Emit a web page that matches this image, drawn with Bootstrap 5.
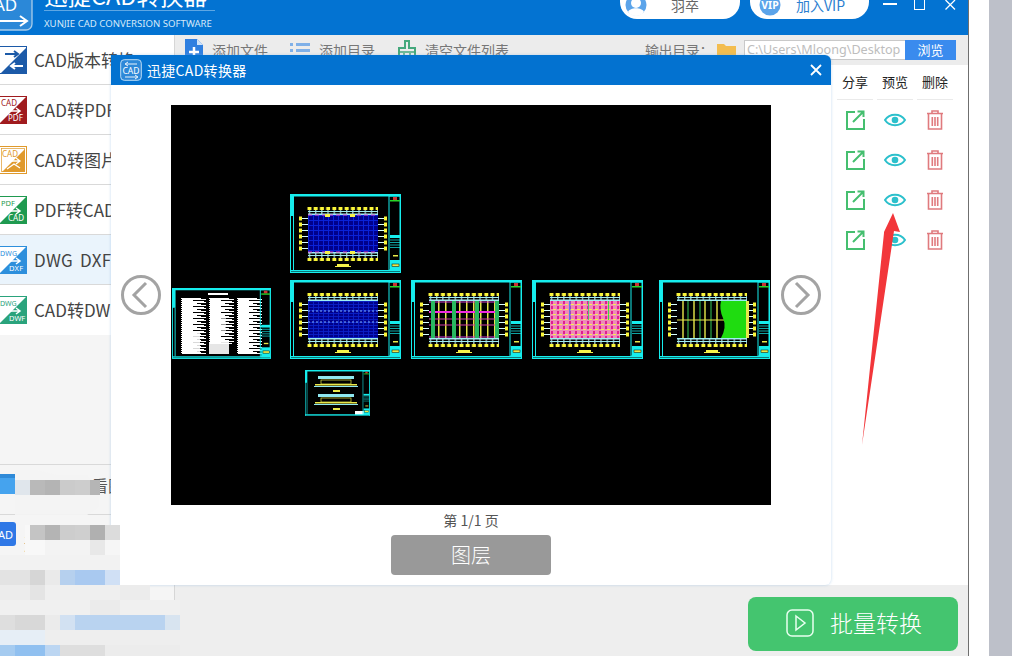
<!DOCTYPE html>
<html lang="zh-CN">
<head>
<meta charset="utf-8">
<title>迅捷CAD转换器</title>
<link href="https://cdn.jsdelivr.net/npm/bootstrap@5.3.0/dist/css/bootstrap.min.css" rel="stylesheet">
<style>
html,body{margin:0;padding:0;background:#fff;overflow:hidden}
body{font-family:"Noto Sans CJK SC","Noto Sans",sans-serif;width:1012px;height:656px}
.screen{width:1012px;height:656px;overflow:hidden;background:#fff}
.appwin{width:969px;height:656px;border-right:1px solid #6f6f6f;flex:none}
.gutter-g{width:23px;background:#bdc0c9;margin-left:20px;flex:none}
.apphead{height:35px;background:#0373d2;overflow:hidden;flex:none}
.logo-box{width:33px;height:46px;flex:none;margin-right:11px;margin-bottom:4px}
.brand-title{font-size:23.5px;line-height:30px;color:#fff;font-weight:400;height:30px;border-bottom:1px solid #5ea7e4;width:171px;white-space:nowrap;overflow:hidden;margin-bottom:0}
.brand-title span{position:relative;top:-1px}
.brand-sub{font-family:"Noto Sans",sans-serif;font-size:9.6px;line-height:13px;color:#d5e9f9;white-space:nowrap;height:24px;padding-top:6px}
.pill-btn{height:40px;background:#fff;color:#666;font-size:14px;width:120px;flex:none;margin-bottom:16px;padding-top:16px;padding-left:10px;text-align:center;line-height:20px;position:relative;border-radius:17px}
.pill-vip{color:#2d7fd0;width:119px;margin-left:10px;padding-left:22px}
.pill-ava{position:absolute;left:1px;top:0;width:30px;height:38px}
.pill-ava-vip{left:5px}
.winctl{margin-bottom:21px;height:14px;flex:none}
.wc-min{width:14px;margin-left:14px}
.wc-max{width:12px;margin-left:17px}
.wc-close{width:11px;margin-left:19px;margin-right:12px}
.appbody{min-height:0}
.sidebar{width:175px;background:#f5f5f5;border-right:1px solid #d6d6d6;flex:none;position:relative}
.side-item{height:50px;background:#fff;border-bottom:1px solid #d9d9d9;color:#444;font-size:17px;line-height:50px;white-space:nowrap;overflow:hidden;padding:0;border-radius:0}
.side-item.is-on{background:#eaf4fc;word-spacing:3px;letter-spacing:.3px}
.side-icn{width:28px;height:28px;margin-left:-1px;margin-right:7px;flex:none}
.side-spacer{height:130px;border-bottom:1px solid #d9d9d9}
.side-mini{height:50px;border-bottom:1px solid #d9d9d9;font-size:16px;color:#555;white-space:nowrap;overflow:hidden}
.mini-ic{flex:none;margin-bottom:11px}
.mini-label{margin-left:76px;margin-bottom:10px}
.mini-label2{margin-left:8px;margin-top:6px}
.toolbar{height:30px;background:#ececec;flex:none;padding:0 12px 0 10px;font-size:14px;color:#777;white-space:nowrap}
.tool-ic{flex:none;margin-right:9px}
.ti-list{margin-left:22px}
.ti-brush{margin-left:23px}
.out-label{margin-left:auto;letter-spacing:-.4px}
.path-box{width:161px;height:20px;border:1px solid #c9c9c9;border-right:0;background:#fff;color:#bdbdbd;font-family:"Noto Sans",sans-serif;font-size:12.6px;line-height:18px;padding-left:2px;overflow:hidden;white-space:nowrap;flex:none}
.browse-btn{width:51px;height:20px;background:#3a8bee;color:#fff;font-size:13px;line-height:20px;text-align:center;border-radius:0;border:0;padding:0}
.work{min-height:0;background:#fff}
.opcol{width:137px;padding-left:6px;flex:none;margin-left:auto}
.ophead{height:35px;font-size:13px;color:#222;line-height:33px;text-align:center;width:36px;border-bottom:1px solid #eaeaea}
.oprow{height:40px}
.opcell{width:36px}
.appfoot{height:71px;background:#eee;flex:none;padding:12px 10px 5px 0}
.go-btn{width:210px;height:54px;background:#44c56f;color:#fff;font-size:23px;line-height:54px;border:0;border-radius:8px;padding:0 0 0 2px;font-weight:300}
.go-label{line-height:30px;margin-bottom:5px}
.go-ic{margin-bottom:2px}
.modalwin{position:absolute;left:111px;top:55px;width:720px;height:530px;background:#fff;border-radius:0 6px 6px 0;box-shadow:0 0 3px rgba(120,170,220,.45)}
.modalbar{height:30px;background:#0372d0;color:#fff;font-size:14px;line-height:30px;border-radius:0 6px 0 0;padding-left:9px}
.modal-close{margin-right:9px}
.modal-name{margin-left:1px;margin-right:auto;letter-spacing:.3px}
.stage-row{padding-top:20px}
.stage{width:600px;height:400px;background:#000;display:block;flex:none}
.navwrap{width:60px;flex:none;margin-bottom:20px}
.page-tip{font-size:14px;color:#555;line-height:20px;margin-top:5px}
.layer-btn{width:160px;height:40px;background:#999;border:0;color:#fff;font-size:20px;line-height:40px;padding:0;border-radius:4px;margin-top:5px;font-weight:300}
.arrowmark{position:absolute;left:855px;top:205px}
.mosaic{position:absolute;left:0;top:465px}
</style>
</head>
<body>
<div class="screen d-flex position-relative">
  <div class="appwin d-flex flex-column">
    <header class="apphead d-flex align-items-end">
      <svg class="logo-box" viewBox="0 0 33 46" aria-hidden="true">
        <rect x="-8" y="-1" width="40" height="46" rx="6" fill="#2b88d8" stroke="#a9cdea" stroke-width="1.300"/>
        <text x="-6" y="26" font-family="Noto Sans,sans-serif" font-size="17" fill="#fff">AD</text>
        <path d="M-3 36H26M20 31l7 5-7 5" fill="none" stroke="#fff" stroke-width="2"/>
      </svg>
      <div class="me-auto">
        <div class="brand-title"><span>迅捷CAD转换器</span></div>
        <div class="brand-sub">XUNJIE CAD CONVERSION SOFTWARE</div>
      </div>
      <div class="pill-btn">
        <svg class="pill-ava" viewBox="0 0 30 38" aria-hidden="true"><circle cx="15" cy="26" r="10.500" fill="#5ba4ea"/><circle cx="15" cy="24" r="5" fill="#fff"/><path d="M7 33c2-5 14-5 16 0a10 10 0 0 1-16 0z" fill="#fff"/></svg>羽卒
      </div>
      <div class="pill-btn pill-vip">
        <svg class="pill-ava pill-ava-vip" viewBox="0 0 30 38" aria-hidden="true"><circle cx="15" cy="26" r="10.500" fill="#5ba4ea"/><text x="15" y="30" text-anchor="middle" font-family="Noto Sans,sans-serif" font-size="10.500" font-weight="700" fill="#fff">VIP</text></svg>加入VIP
      </div>
      <svg class="winctl wc-min" height="14" aria-hidden="true"><path d="M0 4H14" stroke="#fff" stroke-width="2"/></svg>
      <svg class="winctl wc-max" height="14" aria-hidden="true"><rect x=".5" y="-1" width="10" height="10.500" fill="none" stroke="#fff"/></svg>
      <svg class="winctl wc-close" height="14" aria-hidden="true"><path d="M.5 0 10 9.500M10 0 .5 9.500" stroke="#fff" stroke-width="1.300"/></svg>
    </header>

    <div class="appbody d-flex flex-grow-1">
      <aside class="sidebar d-flex flex-column">
        <div class="list-group list-group-flush">
          <div class="list-group-item side-item d-flex align-items-center">
            <svg class="side-icn" viewBox="0 0 28 28" aria-hidden="true"><rect x=".5" y=".5" width="27" height="27" fill="#fff" stroke="#1c5aa8"/><path d="M27 2 2 27h25z" fill="#1c5aa8"/><path d="M6 8h13M15 5l4 3-4 3" fill="none" stroke="#1c5aa8" stroke-width="2"/><path d="M24 20H12M16 17l-4 3 4 3" fill="none" stroke="#fff" stroke-width="2"/></svg>CAD版本转换</div>
          <div class="list-group-item side-item d-flex align-items-center">
            <svg class="side-icn" viewBox="0 0 28 28" aria-hidden="true"><rect x=".5" y=".5" width="27" height="27" fill="#fff" stroke="#a01b1e"/><path d="M27 1 1 27h26z" fill="#a01b1e"/><text x="2" y="10" font-family="Noto Sans,sans-serif" font-size="8" fill="#a01b1e">CAD</text><text x="9" y="25" font-family="Noto Sans,sans-serif" font-size="8" fill="#fff">PDF</text><path d="M5 15H21M17 12l4 3-4 3" fill="none" stroke="#fff" stroke-width="1.500"/></svg>CAD转PDF</div>
          <div class="list-group-item side-item d-flex align-items-center">
            <svg class="side-icn" viewBox="0 0 28 28" aria-hidden="true"><rect x=".5" y=".5" width="27" height="27" fill="#fff" stroke="#e09a2c"/><rect x="2.500" y="2.500" width="23" height="23" fill="none" stroke="#e09a2c" stroke-width=".7"/><path d="M26 3 3 26h23z" fill="#e09a2c"/><text x="3" y="11" font-family="Noto Sans,sans-serif" font-size="8" fill="#e09a2c">CAD</text><path d="M6 15H21M17 12l4 3-4 3M8 23l7-5 6 4" fill="none" stroke="#fff" stroke-width="1.300"/></svg>CAD转图片</div>
          <div class="list-group-item side-item d-flex align-items-center">
            <svg class="side-icn" viewBox="0 0 28 28" aria-hidden="true"><rect x=".5" y=".5" width="27" height="27" fill="#fff" stroke="#1f9a50"/><path d="M27 1 1 27h26z" fill="#1f9a50"/><text x="2" y="10" font-family="Noto Sans,sans-serif" font-size="7.500" fill="#1f9a50">PDF</text><text x="9" y="25" font-family="Noto Sans,sans-serif" font-size="8" fill="#fff">CAD</text><path d="M5 15H21M17 12l4 3-4 3" fill="none" stroke="#fff" stroke-width="1.500"/></svg>PDF转CAD</div>
          <div class="list-group-item side-item is-on d-flex align-items-center">
            <svg class="side-icn" viewBox="0 0 28 28" aria-hidden="true"><rect x=".5" y=".5" width="27" height="27" fill="#fff" stroke="#2d8fdc"/><path d="M27 1 1 27h26z" fill="#2d8fdc"/><text x="1" y="10" font-family="Noto Sans,sans-serif" font-size="7" fill="#2d8fdc">DWG</text><text x="10" y="25" font-family="Noto Sans,sans-serif" font-size="7.500" fill="#fff">DXF</text><path d="M5 15H21M17 12l4 3-4 3" fill="none" stroke="#fff" stroke-width="1.500"/></svg>DWG DXF转换</div>
          <div class="list-group-item side-item d-flex align-items-center">
            <svg class="side-icn" viewBox="0 0 28 28" aria-hidden="true"><rect x=".5" y=".5" width="27" height="27" fill="#fff" stroke="#2aa37c"/><path d="M27 1 1 27h26z" fill="#2aa37c"/><text x="1" y="10" font-family="Noto Sans,sans-serif" font-size="7" fill="#2aa37c">DWG</text><text x="10" y="25" font-family="Noto Sans,sans-serif" font-size="7.500" fill="#fff">DWF</text><path d="M5 15H21M17 12l4 3-4 3" fill="none" stroke="#fff" stroke-width="1.500"/></svg>CAD转DWF</div>
        </div>
        <div class="side-spacer"></div>
        <div class="side-mini d-flex align-items-center">
          <svg width="16" height="24" class="mini-ic" aria-hidden="true"><path d="M-5 2H15V22H-5z" fill="#45a3ee"/><path d="M-5 2H15V6H-5z" fill="#2f8ad8"/></svg><span class="mini-label">看图</span>
        </div>
        <div class="side-mini d-flex align-items-center">
          <svg width="16" height="24" class="mini-ic" aria-hidden="true"><rect x="-6" y="0" width="22" height="24" rx="3" fill="#2f78e6"/><text x="-2" y="17" font-family="Noto Sans,sans-serif" font-size="11" fill="#fff">AD</text></svg><span class="mini-label2">迅</span>
        </div>
      </aside>

      <main class="d-flex flex-column flex-grow-1">
        <div class="toolbar d-flex align-items-center">
          <svg class="tool-ic" width="18" height="22" aria-hidden="true"><path d="M0 0H12L18 6V22H0z" fill="#2f7fe0"/><path d="M9 8v10M4 13h10" stroke="#fff" stroke-width="2.500"/><path d="M12 0l6 6h-6z" fill="#cfe2f8"/></svg>
          <span>添加文件</span>
          <svg class="tool-ic ti-list" width="20" height="16" aria-hidden="true"><g fill="#7fb0e8"><rect y="1" width="3" height="3"/><rect y="7" width="3" height="3"/><rect y="13" width="3" height="3"/><rect x="6" y="1" width="14" height="3"/><rect x="6" y="7" width="14" height="3"/><rect x="6" y="13" width="14" height="3"/></g></svg>
          <span>添加目录</span>
          <svg class="tool-ic ti-brush" width="18" height="20" aria-hidden="true"><path d="M7 1h4v7h6v11H1V8h6z" fill="none" stroke="#45a87c" stroke-width="2"/><path d="M1 12H17M6 13V19M12 13V19" stroke="#45a87c" stroke-width="1.500"/></svg>
          <span>清空文件列表</span>
          <span class="out-label">输出目录：</span>
          <svg width="19" height="14" class="ms-1 me-2" aria-hidden="true"><path d="M0 1H7L9 3H19V14H0z" fill="#f3bd4f"/></svg>
          <div class="path-box">C:\Users\Mloong\Desktop</div>
          <button type="button" class="btn browse-btn">浏览</button>
        </div>
        <div class="work flex-grow-1 d-flex">
          <div class="opcol">
            <div class="d-flex gap-1">
              <div class="ophead">分享</div><div class="ophead">预览</div><div class="ophead">删除</div>
            </div>
            <div class="oprow d-flex gap-1 align-items-center">
              <div class="opcell d-flex justify-content-center"><svg width="20" height="20" viewBox="0 0 20 20" aria-hidden="true"><use href="#ic-share"/></svg></div>
              <div class="opcell d-flex justify-content-center"><svg width="22" height="16" viewBox="0 0 22 16" aria-hidden="true"><use href="#ic-eye"/></svg></div>
              <div class="opcell d-flex justify-content-center"><svg width="16" height="20" viewBox="0 0 16 20" aria-hidden="true"><use href="#ic-trash"/></svg></div>
            </div>
            <div class="oprow d-flex gap-1 align-items-center">
              <div class="opcell d-flex justify-content-center"><svg width="20" height="20" viewBox="0 0 20 20" aria-hidden="true"><use href="#ic-share"/></svg></div>
              <div class="opcell d-flex justify-content-center"><svg width="22" height="16" viewBox="0 0 22 16" aria-hidden="true"><use href="#ic-eye"/></svg></div>
              <div class="opcell d-flex justify-content-center"><svg width="16" height="20" viewBox="0 0 16 20" aria-hidden="true"><use href="#ic-trash"/></svg></div>
            </div>
            <div class="oprow d-flex gap-1 align-items-center">
              <div class="opcell d-flex justify-content-center"><svg width="20" height="20" viewBox="0 0 20 20" aria-hidden="true"><use href="#ic-share"/></svg></div>
              <div class="opcell d-flex justify-content-center"><svg width="22" height="16" viewBox="0 0 22 16" aria-hidden="true"><use href="#ic-eye"/></svg></div>
              <div class="opcell d-flex justify-content-center"><svg width="16" height="20" viewBox="0 0 16 20" aria-hidden="true"><use href="#ic-trash"/></svg></div>
            </div>
            <div class="oprow d-flex gap-1 align-items-center">
              <div class="opcell d-flex justify-content-center"><svg width="20" height="20" viewBox="0 0 20 20" aria-hidden="true"><use href="#ic-share"/></svg></div>
              <div class="opcell d-flex justify-content-center"><svg width="22" height="16" viewBox="0 0 22 16" aria-hidden="true"><use href="#ic-eye"/></svg></div>
              <div class="opcell d-flex justify-content-center"><svg width="16" height="20" viewBox="0 0 16 20" aria-hidden="true"><use href="#ic-trash"/></svg></div>
            </div>
          </div>
        </div>
        <div class="appfoot d-flex justify-content-end">
          <button type="button" class="btn go-btn d-flex align-items-center justify-content-center gap-3">
            <svg class="go-ic" width="28" height="28" viewBox="0 0 28 28" aria-hidden="true"><rect x="1" y="1" width="26" height="26" rx="5" fill="none" stroke="#e8fff0" stroke-width="1.500"/><path d="M10 7l9 7-9 7z" fill="none" stroke="#e8fff0" stroke-width="1.500"/></svg>
            <span class="go-label">批量转换</span>
          </button>
        </div>
      </main>
    </div>
  </div>
  <div class="gutter-g"></div>

  <section class="modalwin d-flex flex-column">
    <div class="modalbar d-flex align-items-center">
      <svg width="22" height="22" viewBox="0 0 22 22" class="me-1" aria-hidden="true"><rect x=".7" y=".7" width="20.600" height="20.600" rx="3.500" fill="#2d88d8" stroke="#bcdcf5"/><text x="11" y="14.500" text-anchor="middle" font-family="Noto Sans,sans-serif" font-size="8.500" fill="#fff">CAD</text><path d="M17 5H6M8 3 5 5l3 2M5 18h12M15 16l3 2-3 2" fill="none" stroke="#fff" stroke-width=".9"/></svg>
      <span class="modal-name">迅捷CAD转换器</span>
      <svg class="modal-close" width="12" height="12" aria-hidden="true"><path d="M1 1 11 11M11 1 1 11" stroke="#fff" stroke-width="1.800"/></svg>
    </div>
    <div class="stage-row d-flex align-items-center">
      <div class="navwrap d-flex justify-content-center">
        <svg width="42" height="42" viewBox="0 0 42 42" aria-hidden="true"><circle cx="21" cy="21" r="18.500" fill="none" stroke="#a3a3a3" stroke-width="3"/><path d="M26 9 14 21l12 12" fill="none" stroke="#a3a3a3" stroke-width="3"/></svg>
      </div>
      <svg class="stage" viewBox="0 0 600 400" aria-hidden="true">
        <defs>
          <pattern id="tH" width="6.200" height="9" patternUnits="userSpaceOnUse"><rect x=".5" width="4" height="3" fill="#fbf63a"/><rect x="2" y="3" width="1" height="6" fill="#d8ffff"/></pattern>
          <pattern id="tHb" width="6.200" height="9" patternUnits="userSpaceOnUse"><rect x=".5" y="6" width="4" height="3" fill="#fbf63a"/><rect x="2" width="1" height="6" fill="#d8ffff"/></pattern>
          <pattern id="tV" width="9" height="6" patternUnits="userSpaceOnUse"><rect y=".5" width="3" height="4" fill="#fbf63a"/><rect x="3" y="2" width="6" height="1" fill="#d8ffff"/></pattern>
          <pattern id="tVr" width="9" height="6" patternUnits="userSpaceOnUse"><rect x="6" y=".5" width="3" height="4" fill="#fbf63a"/><rect y="2" width="6" height="1" fill="#d8ffff"/></pattern>
          <pattern id="gB" width="5" height="5" patternUnits="userSpaceOnUse"><rect width="5" height="5" fill="#00008c"/><path d="M0 .5H5M.5 0V5" stroke="#0a22d8" stroke-width="1"/></pattern>
          <pattern id="gB2" width="5" height="3" patternUnits="userSpaceOnUse"><rect width="5" height="3" fill="#00008a"/><path d="M0 .5H5M.5 0V3" stroke="#0a20c8" stroke-width=".9"/></pattern>
          <pattern id="gP" width="6" height="5" patternUnits="userSpaceOnUse"><rect width="6" height="5" fill="#ee8bb8"/><rect x="1" width="2" height="3" fill="#e01e90"/><rect x="3" y="3" width="3" height="1" fill="#f7f04a"/></pattern>
          <pattern id="gY" width="7" height="40" patternUnits="userSpaceOnUse"><rect x="2" width="1.500" height="40" fill="#e6e84a"/></pattern>
          <pattern id="wT" width="26" height="6" patternUnits="userSpaceOnUse"><rect width="20" height="1" fill="#fff"/><rect x="1" y="1" width="24" height="1" fill="#fff"/><rect y="2" width="12" height="1" fill="#fff"/><rect x="1" y="3" width="22" height="1" fill="#fff"/><rect y="4" width="25" height="1" fill="#fff"/><rect x="1" y="5" width="15" height="1" fill="#fff"/></pattern>
          <symbol id="frame" viewBox="0 0 111 79" preserveAspectRatio="none">
            <rect x=".5" y=".5" width="110" height="78" fill="none" stroke="#16eded"/>
            <rect width="111" height="2.500" fill="#16eded"/>
            <rect y="76" width="111" height="1.500" fill="#16eded"/>
            <rect width="4" height="22" fill="#16eded"/>
            <path d="M3.500 22V76" stroke="#16eded"/>
            <rect x="99" y="2" width="11" height="74" fill="none" stroke="#16eded" stroke-width="1"/>
            <rect x="103" y="3" width="4" height="3" fill="#c33"/><rect x="100" y="6" width="10" height="1.500" fill="#28d428"/>
            <rect x="100" y="41" width="10" height="3" fill="#16eded"/>
            <path d="M100 46H110M100 48.500H110M100 51H110M100 53.500H110" stroke="#16eded" stroke-width=".7"/>
            <rect x="103" y="61" width="5" height="1.500" fill="#e8e84a"/>
            <rect x="100" y="66" width="10" height="11" fill="#16eded"/><rect x="102" y="70" width="7" height="2.500" fill="#e8e84a" stroke="#000" stroke-width=".5"/>
          </symbol>
          <symbol id="plan" viewBox="0 0 111 79">
            <g transform="translate(17 13)"><rect width="71" height="9" fill="url(#tH)"/></g>
            <g transform="translate(17 58)"><rect width="71" height="9" fill="url(#tHb)"/></g>
            <g transform="translate(9 22)"><rect width="9" height="36" fill="url(#tV)"/></g>
            <g transform="translate(88 22)"><rect width="9" height="36" fill="url(#tVr)"/></g>
            <rect x="18" y="17" width="70" height="1" fill="#9feef4"/><rect x="18" y="19.500" width="70" height="1.500" fill="#9feef4"/>
            <rect x="18" y="58" width="70" height="1.500" fill="#9feef4"/><rect x="18" y="61" width="70" height="1" fill="#9feef4"/>
            <rect x="47" y="70" width="12" height="2" fill="#f6f24a"/><rect x="45" y="72" width="16" height="1" fill="#f6f24a"/>
          </symbol>
        </defs>

        <g transform="translate(119 89)">
          <use href="#plan" width="111" height="79"/>
          <g transform="translate(18 21)"><rect width="70" height="37" fill="url(#gB)"/></g>
          <path d="M18 21H88M18 58H88" stroke="#e040c0" stroke-width="1" stroke-dasharray="4 3"/>
          <rect x="35" y="20" width="5" height="3" fill="#f6f24a"/><rect x="60" y="20" width="5" height="3" fill="#f6f24a"/><rect x="35" y="57" width="5" height="3" fill="#f6f24a"/><rect x="60" y="57" width="5" height="3" fill="#f6f24a"/>
          <use href="#frame" width="111" height="79"/>
        </g>
        <g transform="translate(119 175)">
          <use href="#plan" width="111" height="79"/>
          <g transform="translate(18 21)"><rect width="70" height="37" fill="url(#gB2)"/></g>
          <path d="M18 31H88M18 42H88" stroke="#7fb0ff" stroke-width="1" stroke-dasharray="2 2"/>
          <use href="#frame" width="111" height="79"/>
        </g>
        <g transform="translate(240 175)">
          <use href="#plan" width="111" height="79"/>
          <rect x="18" y="21" width="70" height="37" fill="#000"/>
          <g transform="translate(18 21)"><rect width="70" height="37" fill="url(#gY)"/></g>
          <path d="M18 32H88" stroke="#f02ae0" stroke-width="2"/><path d="M18 39H88M18 45H88" stroke="#d03aa0" stroke-width="1"/><path d="M18 22H88M18 57H88" stroke="#d040d0" stroke-width="1"/>
          <rect x="20" y="21" width="4" height="37" fill="#28b860"/><rect x="41" y="21" width="4" height="37" fill="#28b860"/><rect x="64" y="21" width="4" height="37" fill="#28b860"/><rect x="84" y="21" width="4" height="37" fill="#28b860"/>
          <use href="#frame" width="111" height="79"/>
        </g>
        <g transform="translate(361 175)">
          <use href="#plan" width="111" height="79"/>
          <g transform="translate(18 21)"><rect width="70" height="37" fill="url(#gP)"/></g>
          <rect x="37" y="21" width="1.500" height="19" fill="#5a78e8"/><rect x="56" y="21" width="1" height="19" fill="#58b878"/><rect x="76" y="21" width="1" height="19" fill="#40d048"/>
          <use href="#frame" width="111" height="79"/>
        </g>
        <g transform="translate(488 175)">
          <use href="#plan" width="111" height="79"/>
          <rect x="18" y="21" width="70" height="37" fill="#000"/>
          <path d="M24 21V58M35 21V58M46 21V58M58 21V58M70 21V58" stroke="#e8e84a" stroke-width="1.400"/>
          <path d="M29 21V58M41 21V58M52 21V58" stroke="#2ca848" stroke-width="1.200"/>
          <path d="M18 40H88" stroke="#e8e84a" stroke-width="1"/>
          <path d="M62 21H88V58H62Q68 47 64 38T62 21z" fill="#1fdc10"/>
          <rect x="87" y="21" width="3" height="37" fill="#e8e84a"/>
          <use href="#frame" width="111" height="79"/>
        </g>
        <g transform="translate(1 183)">
          <g transform="translate(9 10)"><rect width="26" height="56" fill="url(#wT)"/></g>
          <g transform="translate(37 10)"><rect width="26" height="46" fill="url(#wT)"/></g>
          <g transform="translate(65 10)"><rect width="26" height="56" fill="url(#wT)"/></g>
          <rect x="10" y="44" width="18" height="22" fill="#fff" opacity=".85"/><rect x="37" y="54" width="20" height="12" fill="#fff" opacity=".9"/><rect x="44" y="30" width="10" height="14" fill="#fff" opacity=".6"/>
          <rect x="36" y="5" width="20" height="2" fill="#fff"/>
          <svg x="0" y="0" width="99" height="71"><use href="#frame" width="99" height="71"/></svg>
        </g>
        <g transform="translate(134 265)">
          <rect x="13" y="6" width="36" height="3" fill="#8fe8f0"/><rect x="10" y="14" width="42" height="1.500" fill="#e8e84a"/><rect x="9" y="16" width="44" height="1" fill="#8fe8f0"/>
          <rect x="16" y="10" width="30" height="4" fill="none" stroke="#e8e84a" stroke-width=".7"/><rect x="28" y="20" width="7" height="2" fill="#e8e84a"/>
          <rect x="13" y="24" width="36" height="3" fill="#8fe8f0"/><rect x="10" y="32" width="42" height="1.500" fill="#e8e84a"/><rect x="9" y="34" width="44" height="1" fill="#8fe8f0"/>
          <rect x="16" y="28" width="30" height="4" fill="none" stroke="#e8e84a" stroke-width=".7"/><rect x="28" y="38" width="7" height="2" fill="#e8e84a"/>
          <rect x="50" y="41" width="9" height="4" fill="#fff"/>
          <svg x="0" y="0" width="65" height="46"><use href="#frame" width="65" height="46"/></svg>
        </g>
      </svg>
      <div class="navwrap d-flex justify-content-center">
        <svg width="42" height="42" viewBox="0 0 42 42" aria-hidden="true"><circle cx="21" cy="21" r="18.500" fill="none" stroke="#a3a3a3" stroke-width="3"/><path d="M16 9l12 12-12 12" fill="none" stroke="#a3a3a3" stroke-width="3"/></svg>
      </div>
    </div>
    <div class="d-flex flex-column align-items-center">
      <div class="page-tip">第 1/1 页</div>
      <button type="button" class="btn layer-btn">图层</button>
    </div>
  </section>

  <svg class="mosaic" width="180" height="191" viewBox="0 0 180 191" aria-hidden="true">
    <path d="M15 5h22l20 5h30l12 12v20l-12 8H15z" fill="#f4f4f4" opacity=".9"/>
    <path d="M25 60h75l20 0v45H35l-10-15z" fill="#f8f8f8"/>
    <g>
      <rect x="15" y="15" width="15" height="15" fill="#e0e6ec"/><rect x="30" y="15" width="15" height="15" fill="#b9b9b9"/><rect x="45" y="15" width="15" height="15" fill="#b4b4b4"/><rect x="60" y="15" width="15" height="15" fill="#cbcbcb"/><rect x="75" y="15" width="15" height="15" fill="#cdcdcd"/><rect x="90" y="15" width="10" height="15" fill="#b5b5b5"/>
      <rect x="30" y="60" width="15" height="15" fill="#c4c4c4"/><rect x="45" y="60" width="15" height="15" fill="#b4b4b4"/><rect x="60" y="60" width="15" height="15" fill="#cdcdcd"/><rect x="75" y="60" width="15" height="15" fill="#cfcfcf"/><rect x="90" y="60" width="15" height="15" fill="#b0b0b0"/><rect x="105" y="60" width="15" height="15" fill="#dcdcdc"/>
      <rect x="45" y="75" width="45" height="15" fill="#f3f3f3"/><rect x="90" y="75" width="15" height="15" fill="#e8e8e8"/><rect x="105" y="75" width="15" height="15" fill="#f6f6f6"/>
      <rect x="0" y="90" width="120" height="15" fill="#f2f2f2"/>
      <rect x="0" y="105" width="30" height="15" fill="#e3e3e3"/><rect x="30" y="105" width="15" height="15" fill="#d6d6d6"/><rect x="45" y="105" width="15" height="15" fill="#eaeaea"/><rect x="60" y="105" width="15" height="15" fill="#b6d0ee"/><rect x="75" y="105" width="30" height="15" fill="#a9c9f0"/><rect x="105" y="105" width="15" height="15" fill="#d0e0f5"/>
      <rect x="0" y="120" width="30" height="15" fill="#ececec"/><rect x="30" y="120" width="15" height="15" fill="#e4e4e4"/><rect x="45" y="120" width="75" height="15" fill="#efefef"/><rect x="120" y="120" width="30" height="15" fill="#ececec"/>
      <rect x="0" y="135" width="180" height="15" fill="#f0f0f0"/><rect x="90" y="135" width="30" height="15" fill="#ebebeb"/>
      <rect x="0" y="150" width="15" height="15" fill="#dedede"/><rect x="15" y="150" width="30" height="15" fill="#d8d8d8"/><rect x="45" y="150" width="15" height="15" fill="#ebebeb"/><rect x="60" y="150" width="15" height="15" fill="#d2e1f2"/><rect x="75" y="150" width="90" height="15" fill="#b9d3f0"/><rect x="165" y="150" width="15" height="15" fill="#d8e4f0"/>
      <rect x="0" y="165" width="45" height="15" fill="#e6eef6"/><rect x="45" y="165" width="135" height="15" fill="#eeeeee"/>
      <rect x="0" y="180" width="15" height="11" fill="#a5cbf0"/><rect x="15" y="180" width="30" height="11" fill="#90c0f0"/><rect x="45" y="180" width="15" height="11" fill="#bcd6f2"/><rect x="60" y="180" width="45" height="11" fill="#dedede"/><rect x="105" y="180" width="75" height="11" fill="#ececec"/>
    </g>
  </svg>

  <svg class="arrowmark" width="50" height="245" viewBox="0 0 50 245" aria-hidden="true">
    <path d="M38 8 45 27 39 26 7 240 29 28 29 27z" fill="#f2363a"/>
  </svg>

  <svg width="0" height="0" class="position-absolute" aria-hidden="true">
    <defs>
      <g id="ic-share" fill="none" stroke="#45bf6f" stroke-width="2"><path d="M10 2H2V19H19V9"/><path d="M8 12 18 2M12.500 1.500H18.500V7"/></g>
      <g id="ic-eye"><path d="M1 8C5.500 1 16.500 1 21 8 16.500 15 5.500 15 1 8z" fill="none" stroke="#2cc0cc" stroke-width="2"/><circle cx="11" cy="8" r="3.300" fill="#2cc0cc"/></g>
      <g id="ic-trash" fill="none" stroke="#e07a7e" stroke-width="1.600"><path d="M0 3.500H16M5 3V1H11V3"/><path d="M1.500 4V19H14.500V4"/><path d="M5.300 7V16M8 7V16M10.700 7V16"/></g>
    </defs>
  </svg>
</div>
</body>
</html>
